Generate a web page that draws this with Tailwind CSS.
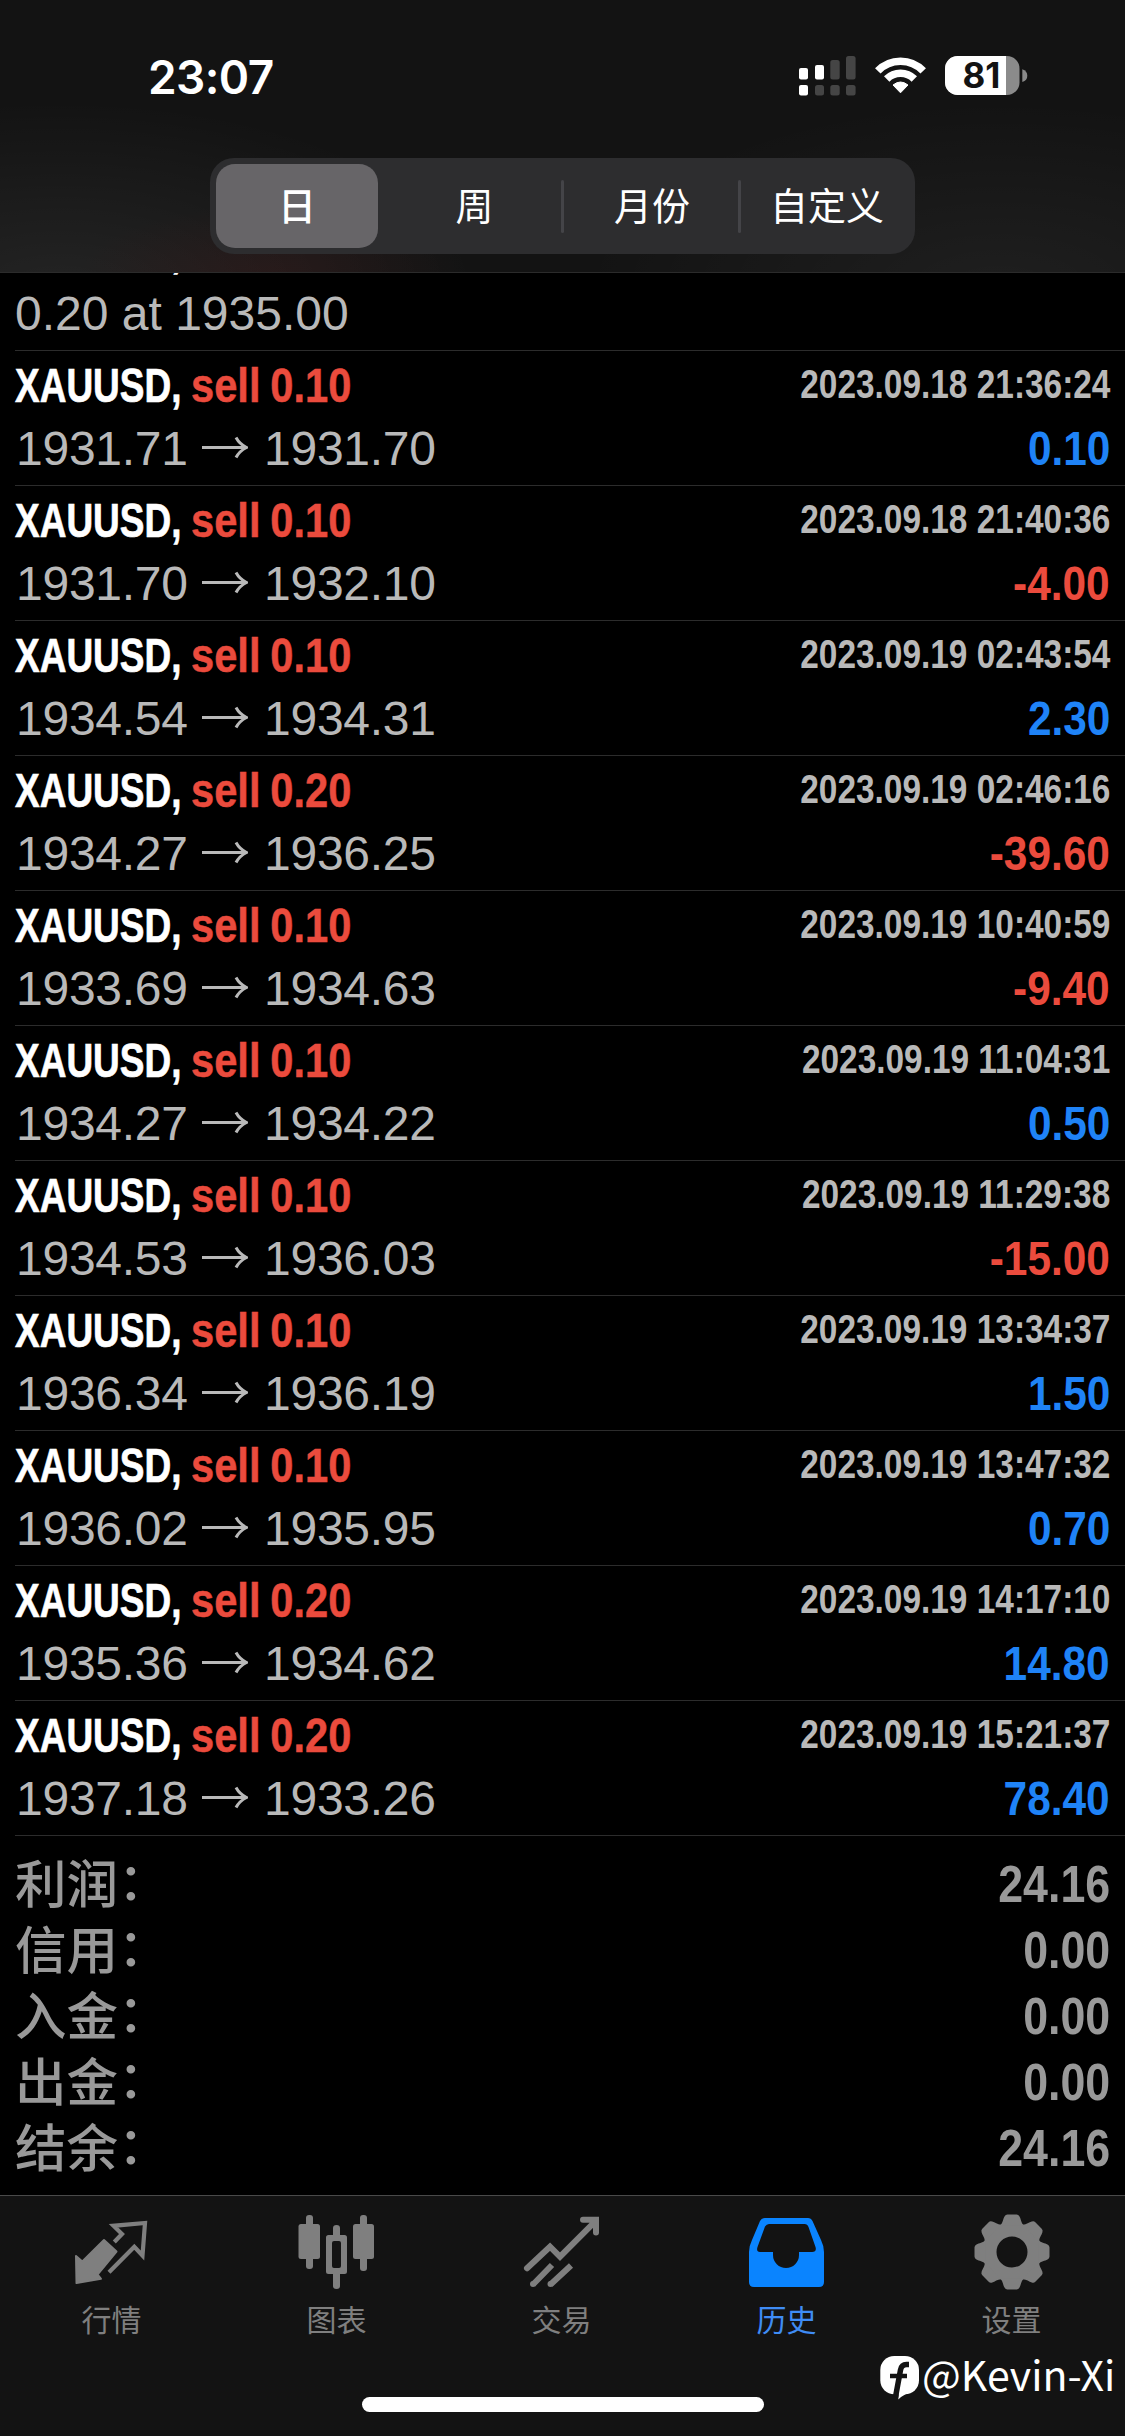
<!DOCTYPE html>
<html lang="zh-CN">
<head>
<meta charset="utf-8">
<title>历史</title>
<script src="https://cdn.jsdelivr.net/npm/@tailwindcss/browser@4"></script>
</head>
<body class="bg-black">
<div class="relative flex h-[2436px] w-[1125px] flex-col overflow-hidden bg-black font-['Liberation_Sans','Noto_Sans_CJK_SC',sans-serif]">

  <header class="h-[273px] shrink-0 border-b border-[#2b2b2b] bg-[#131313] bg-[radial-gradient(ellipse_190px_70px_at_270px_275px,rgba(70,25,25,0.3),transparent),radial-gradient(ellipse_420px_190px_at_60px_290px,rgba(255,255,255,0.07),transparent),radial-gradient(ellipse_420px_190px_at_1000px_290px,rgba(255,255,255,0.05),transparent)]">
    <div class="flex h-[152px] items-center pl-[148px] pr-[95px]">
      <div class="mt-px font-['Inter',sans-serif] text-[46px] font-semibold leading-none tracking-[-0.6px] text-white">23:07</div>
      <svg class="ml-auto h-[52px] w-[235px]" viewBox="795 50 235 52">
        <g fill="#fff"><rect x="799" y="68" width="9" height="11.5" rx="2"/><rect x="815" y="65" width="9" height="14.5" rx="2"/><rect x="799" y="85" width="9" height="10.5" rx="2"/></g>
        <g fill="#454545"><rect x="830.3" y="60" width="9.4" height="19.5" rx="2.5"/><rect x="846" y="56" width="9.6" height="23.5" rx="2.5"/><rect x="815" y="85" width="9" height="10.5" rx="2.5"/><rect x="830.3" y="85" width="9.4" height="10.5" rx="2.5"/><rect x="846" y="85" width="9.6" height="10.5" rx="2.5"/></g>
        <g fill="none" stroke="#fff" stroke-width="7.6"><path d="M877.8 70.9A31.4 31.4 0 0 1 923.2 70.9"/><path d="M886.7 79A19.4 19.4 0 0 1 914.3 79"/></g>
        <path fill="#fff" stroke="#fff" stroke-width="1" stroke-linejoin="round" d="M900.5 92.8L893 85Q900.5 79 908 85Z"/>
        <clipPath id="b"><rect x="945" y="56" width="74.5" height="39" rx="12.5"/></clipPath>
        <g clip-path="url(#b)"><rect x="945" y="56" width="75" height="39" fill="#8b8b8b"/><rect x="945" y="56" width="61" height="39" fill="#fff"/></g>
        <path fill="#8b8b8b" d="M1022.3 69.3Q1027.3 71 1027.3 75.7T1022.3 82.1Z"/>
        <text x="981.5" y="88" text-anchor="middle" fill="#131313" class="font-['Inter',sans-serif] text-[35px] font-bold">81</text>
      </svg>
    </div>
    <div class="ml-[210px] mt-[6px] flex h-[96px] w-[705px] items-center rounded-[24px] bg-[#2d2d2f] px-[6px] text-[38px] text-white">
      <div class="flex h-[84px] w-[162px] items-center justify-center rounded-[19px] bg-[#676568] pt-[2px] font-medium">日</div>
      <div class="flex h-[84px] flex-1 items-center justify-center pl-[10px] pt-[2px]">周</div>
      <div class="h-[53px] w-[3px] rounded-full bg-[#444448]"></div>
      <div class="flex h-[84px] w-[174px] items-center justify-center pl-[2px] pt-[2px]">月份</div>
      <div class="h-[53px] w-[3px] rounded-full bg-[#444448]"></div>
      <div class="flex h-[84px] w-[168px] items-center justify-center pl-[4px] pt-[2px]">自定义</div>
    </div>
  </header>

  <main id="deals" class="shrink-0">
    <div class="ml-[15px] flex h-[78px] flex-col justify-end overflow-hidden border-b border-[#2c2c2c] pb-[12px]">
      <div class="origin-left scale-x-[0.755] whitespace-nowrap text-[49px] font-bold leading-[48px] text-white [-webkit-text-stroke:0.7px]">XAUUSD,</div>
      <div class="mt-[16px] whitespace-nowrap text-[48px] leading-[48px] text-[#b9b9b9]">0.20 at 1935.00</div>
    </div>
  </main>

  <section id="totals" class="flex-1 pl-[15px] pr-[15px] pt-[14px] text-[#999]"></section>

  <nav class="-mx-px grid h-[241px] shrink-0 grid-cols-5 border-t border-[#4a4a4a] bg-[#131313] pr-[2px] pt-[14px] text-[#7f7f7f]">
    <div class="flex flex-col items-center">
      <svg class="size-[84px]" viewBox="70 30 84 84">
        <path fill="currentColor" stroke="currentColor" stroke-width="2" stroke-linejoin="round" d="M76 76L82.3 81.5L104 60L116.5 71.5L97.5 94.5L101 98.8L76.5 103Z"/>
        <path fill="none" stroke="currentColor" stroke-width="4.2" d="M114.3 62L122 54L113.5 45.8L145 43L142.5 75.5L134.3 66.8L109 92.3" stroke-linejoin="miter"/>
      </svg>
      <div class="mt-[7px] text-[30px] leading-[40px]">行情</div>
    </div>
    <div class="flex flex-col items-center">
      <svg class="size-[84px]" viewBox="295 30 84 84" fill="currentColor">
        <rect x="306" y="35" width="7" height="54" rx="3"/><rect x="298.5" y="44" width="21.5" height="35" rx="2.5"/>
        <rect x="360" y="35" width="7" height="56" rx="3"/><rect x="353" y="44" width="21" height="35" rx="2.5"/>
        <path d="M333 58V48Q333 45 336.500 45T340 48V58ZM333 90V106Q333 109 336.500 109T340 106V90Z"/>
        <path fill-rule="evenodd" d="M328.500 55H344.500Q347 55 347 57.500V91.500Q347 94 344.500 94H328.500Q326 94 326 91.500V57.500Q326 55 328.500 55ZM334 61Q332 61 332 63V86Q332 88 334 88H339Q341 88 341 86V63Q341 61 339 61Z"/>
      </svg>
      <div class="mt-[7px] text-[30px] leading-[40px]">图表</div>
    </div>
    <div class="flex flex-col items-center">
      <svg class="size-[84px]" viewBox="520 2210 84 84" fill="none" stroke="currentColor" stroke-width="6">
        <path stroke-linecap="round" d="M527 2268.300L550 2246.700L560 2256.700L595 2221.700M583 2219.700H596V2232.500"/>
        <path d="M552 2265L533 2284.500M571 2265.500L550.500 2284.500"/>
        <g fill="currentColor" stroke="none"><circle cx="533" cy="2284" r="3"/><circle cx="550.500" cy="2284" r="3"/></g>
      </svg>
      <div class="mt-[7px] text-[30px] leading-[40px]">交易</div>
    </div>
    <div class="flex flex-col items-center text-[#0a84ff]">
      <svg class="size-[84px]" viewBox="745 2210 84 84" fill="currentColor">
        <path fill-rule="evenodd" d="M765 2218H808Q811 2218 812.500 2221L821 2240Q824 2246 824 2252V2282Q824 2287 819 2287H754Q749 2287 749 2282V2252Q749 2246 752 2240L760 2221Q761.500 2218 765 2218ZM769 2224Q766.500 2224 765 2226.500L757.500 2247Q756 2252 760 2252H773V2255A13 13 0 0 0 799 2255V2252H812Q817 2252 815.500 2247L808.500 2227Q807.500 2224 804.500 2224Z"/>
      </svg>
      <div class="mt-[7px] text-[30px] leading-[40px] text-[#3f8cf5]">历史</div>
    </div>
    <div class="flex flex-col items-center">
      <svg class="size-[84px]" viewBox="-42 -42 84 84" fill="currentColor">
        <defs><path id="t" d="M-12 -26.500C-9 -29 -9 -33 -7.500 -35.500Q-6.500 -37.500 -4.500 -37.500H4.500Q6.500 -37.500 7.500 -35.500C9 -33 9 -29 12 -26.500Z"/></defs>
        <circle r="22.500" fill="none" stroke="currentColor" stroke-width="14"/>
        <use href="#t"/><use href="#t" transform="rotate(45)"/><use href="#t" transform="rotate(90)"/><use href="#t" transform="rotate(135)"/><use href="#t" transform="rotate(180)"/><use href="#t" transform="rotate(225)"/><use href="#t" transform="rotate(270)"/><use href="#t" transform="rotate(315)"/>
      </svg>
      <div class="mt-[7px] text-[30px] leading-[40px]">设置</div>
    </div>
  </nav>

  <div class="absolute bottom-[24px] left-[362px] h-[15px] w-[402px] rounded-full bg-white"></div>

  <div class="absolute bottom-[32px] left-[879px] flex h-[52px] items-start text-white">
    <svg class="mt-[3px] h-[46px] w-[42px]" viewBox="0 0 42 46">
      <rect x="1.300" y="1" width="38.700" height="38.300" rx="14" fill="#fff"/>
      <path fill="#fff" d="M19.300 44.500L20 36H35Q26 38 19.300 44.500Z"/>
      <path fill="none" stroke="#131313" stroke-width="5.500" d="M30 9.500H27.500Q22.500 9.500 21.500 15L16.500 42"/>
      <path stroke="#131313" stroke-width="4.500" d="M11 21H28"/>
    </svg>
    <span class="-mt-[5px] ml-px whitespace-nowrap font-['Noto_Sans_CJK_SC',sans-serif] text-[41px] leading-[52px]">@Kevin-Xi</span>
  </div>
</div>

<script>
const deals = [
  ['0.10', '2023.09.18 21:36:24', '1931.71', '1931.70', '0.10'],
  ['0.10', '2023.09.18 21:40:36', '1931.70', '1932.10', '-4.00'],
  ['0.10', '2023.09.19 02:43:54', '1934.54', '1934.31', '2.30'],
  ['0.20', '2023.09.19 02:46:16', '1934.27', '1936.25', '-39.60'],
  ['0.10', '2023.09.19 10:40:59', '1933.69', '1934.63', '-9.40'],
  ['0.10', '2023.09.19 11:04:31', '1934.27', '1934.22', '0.50'],
  ['0.10', '2023.09.19 11:29:38', '1934.53', '1936.03', '-15.00'],
  ['0.10', '2023.09.19 13:34:37', '1936.34', '1936.19', '1.50'],
  ['0.10', '2023.09.19 13:47:32', '1936.02', '1935.95', '0.70'],
  ['0.20', '2023.09.19 14:17:10', '1935.36', '1934.62', '14.80'],
  ['0.20', '2023.09.19 15:21:37', '1937.18', '1933.26', '78.40'],
];
document.getElementById('deals').insertAdjacentHTML('beforeend', deals.map(([vol, time, open, close, profit]) => `
  <div class="ml-[15px] flex h-[135px] flex-col border-b border-[#2c2c2c] pr-[15px] pt-[10px]">
    <div class="flex h-[48px] items-start whitespace-nowrap font-bold">
      <div class="w-[176px] origin-left scale-x-[0.755] text-[49px] leading-[48px] text-white [-webkit-text-stroke:0.7px]">XAUUSD,</div>
      <div class="origin-left scale-x-[0.85] text-[49px] leading-[48px] text-[#eb4b3d] [-webkit-text-stroke:0.5px] [word-spacing:-2px]">sell ${vol}</div>
      <div class="ml-auto origin-right scale-x-[0.835] text-[40px] leading-[47px] text-[#b9b9b9]">${time}</div>
    </div>
    <div class="mt-[15px] flex h-[48px] items-start whitespace-nowrap text-[48px] leading-[48px]">
      <div class="w-[187px] pl-px pt-px tracking-[-0.25px] text-[#b9b9b9]">${open}</div>
      <svg class="h-[48px] w-[46px]" viewBox="0 0 46 48" fill="none" stroke="#b9b9b9" stroke-width="3"><path d="M0 23.500H44M34 13.500Q37.500 20 44.500 23.500Q37.500 27 34 33.500"/></svg>
      <div class="ml-[16px] pt-px tracking-[-0.25px] text-[#b9b9b9]">${close}</div>
      <div class="ml-auto origin-right scale-x-[0.865] text-[49px] font-bold ${profit[0] === '-' ? 'text-[#eb4b3d]' : 'text-[#1f83f7]'}">${profit}</div>
    </div>
  </div>`).join(''));

const totals = [['利润', '24.16'], ['信用', '0.00'], ['入金', '0.00'], ['出金', '0.00'], ['结余', '24.16']];
document.getElementById('totals').innerHTML = totals.map(([label, value]) => `
  <div class="flex h-[66px] items-start">
    <div class="mt-[4px] flex text-[51.5px] font-medium leading-[62px]"><span>${label}</span><span class="-mt-[3px]">：</span></div>
    <div class="ml-auto origin-right scale-x-[0.86] text-[52px] font-bold leading-[68px]">${value}</div>
  </div>`).join('');
</script>
</body>
</html>
